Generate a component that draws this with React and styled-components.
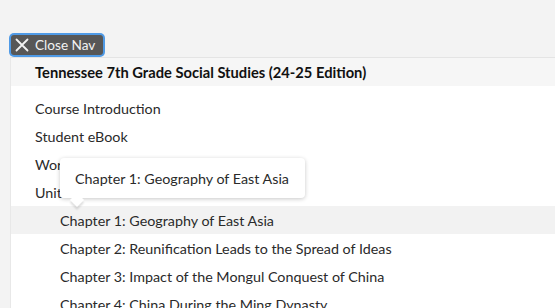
import React from "react";
import styled, { createGlobalStyle } from "styled-components";

const GlobalStyle = createGlobalStyle`
	html, body {
		margin: 0;
		background: #f3f3f3;
		font-family: Lato, "Noto Sans", sans-serif;
		overflow: hidden;
	}
`;

const items = [
	{ label: "Course Introduction", level: 1 },
	{ label: "Student eBook", level: 1 },
	{ label: "Workbook", level: 1 },
	{ label: "Unit 1: East Asia", level: 1 },
	{ label: "Chapter 1: Geography of East Asia", level: 2, active: true, tip: true },
	{ label: "Chapter 2: Reunification Leads to the Spread of Ideas", level: 2 },
	{ label: "Chapter 3: Impact of the Mongul Conquest of China", level: 2 },
	{ label: "Chapter 4: China During the Ming Dynasty", level: 2 },
	{ label: "Chapter 5: Feudal Japan", level: 2 },
	{ label: "Chapter 6: The Rise of the Samurai", level: 2 },
	{ label: "Unit 2: Europe", level: 1 },
	{ label: "Chapter 7: The Fall of Rome", level: 2 },
	{ label: "Chapter 8: The Byzantine Empire", level: 2 },
	{ label: "Chapter 9: Feudalism in Europe", level: 2 },
];

const CloseIcon = () => (
	<svg width="14" height="14" viewBox="0 0 14 14">
		<path d="M1.5 1.5 L12.5 12.5 M12.5 1.5 L1.5 12.5" stroke="#f2f2f2" strokeWidth="1.8" strokeLinecap="round" />
	</svg>
);

const App = () => {
	return (
		<>
			<GlobalStyle />
			<StyledPage>
				<StyledCloseButton>
					<CloseIcon />
					Close Nav
				</StyledCloseButton>
				<StyledPanel>
					<StyledHeader>Tennessee 7th Grade Social Studies (24-25 Edition)</StyledHeader>
					<StyledList>
						{items.map((item) => (
							<StyledRow key={item.label} $level={item.level} $active={item.active}>
								{item.label}
								{item.tip && <StyledTooltip>{item.label}</StyledTooltip>}
							</StyledRow>
						))}
					</StyledList>
				</StyledPanel>
			</StyledPage>
		</>
	);
};

const StyledPage = styled.div`
	padding-top: 35px;
	display: flex;
	flex-direction: column;
	align-items: flex-start;
`;

const StyledCloseButton = styled.button`
	margin-left: 11px;
	height: 20px;
	display: flex;
	align-items: center;
	gap: 6px;
	padding: 0 8px 0 4px;
	background: #575757;
	color: #f2f2f2;
	border: none;
	border-radius: 3px;
	box-shadow: 0 0 0 2px #4f9ae6;
	font-family: Lato, "Noto Sans", sans-serif;
	font-size: 13.6px;
	cursor: pointer;
`;

const StyledPanel = styled.div`
	margin-top: 2px;
	margin-left: 10px;
	align-self: stretch;
	height: 420px;
	overflow-y: scroll;
	background: #ffffff;
	border-top: 1px solid #e4e4e4;
	border-left: 1px solid #e8e8e8;
	&::-webkit-scrollbar {
		width: 5px;
	}
	&::-webkit-scrollbar-thumb {
		background: #a9a9a9;
		border-left: 1px solid #c8c8c8;
	}
	&::-webkit-scrollbar-track {
		background: #f0f0f0;
	}
`;

const StyledHeader = styled.div`
	height: 28px;
	display: flex;
	align-items: center;
	padding-left: 24px;
	background: #f6f6f6;
	color: #111;
	font-size: 14.7px;
	font-weight: 700;
`;

const StyledList = styled.div`
	padding: 8px 0 20px;
`;

const StyledRow = styled.div`
	position: relative;
	height: 28px;
	display: flex;
	align-items: center;
	padding-left: ${(p) => (p.$level === 2 ? "49px" : "24px")};
	background: ${(p) => (p.$active ? "#f2f2f2" : "transparent")};
	color: #2a2a2a;
	font-size: 14.3px;
	white-space: nowrap;
`;

const StyledTooltip = styled.div`
	position: absolute;
	left: 49px;
	bottom: calc(100% + 8px);
	padding: 0 16px 0 15px;
	height: 40px;
	display: flex;
	align-items: center;
	background: #fff;
	border-radius: 4px;
	box-shadow: 0 1px 4px rgba(0, 0, 0, 0.22);
	color: #2a2a2a;
	font-size: 14.3px;
	z-index: 2;
	&::after {
		content: "";
		position: absolute;
		left: 12px;
		bottom: -7px;
		width: 10px;
		height: 10px;
		background: #fff;
		transform: rotate(45deg);
		box-shadow: 2px 2px 2px rgba(0, 0, 0, 0.12);
		z-index: -1;
	}
`;

export default App;
